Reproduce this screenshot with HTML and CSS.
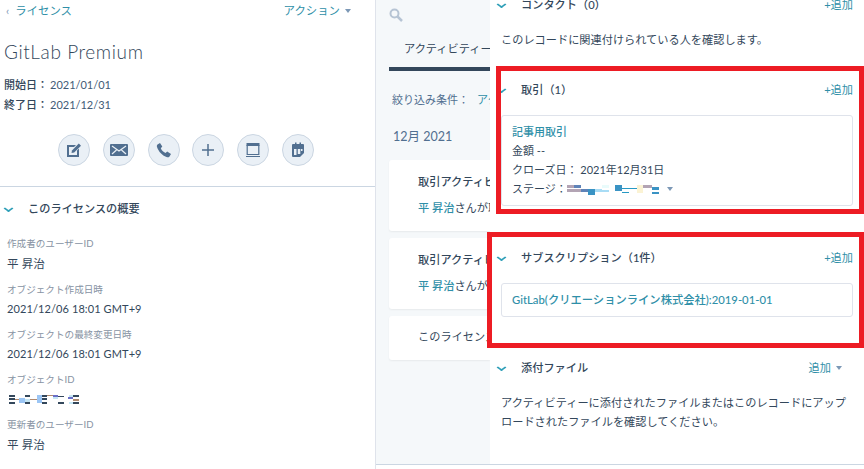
FILE: index.html
```html
<!DOCTYPE html>
<html lang="ja">
<head>
    <meta charset="UTF-8">
    <meta name="viewport" content="width=device-width, initial-scale=1.0">
    <title>GitLab Premium</title>
    <link rel="stylesheet" href="styles.css">
</head>
<body>

<div class="page">
    <aside class="sidebar">
        <div class="topbar">
            <a class="back-link"><span class="back-arrow">‹</span>ライセンス</a>
            <a class="action-link">アクション<span class="caret"></span></a>
        </div>
        <h1 class="record-title">GitLab Premium</h1>
        <div class="date-row"><span class="date-label">開始日：</span>2021/01/01</div>
        <div class="date-row"><span class="date-label">終了日：</span>2021/12/31</div>

        <div class="actions">
            <button class="round-btn">
                <svg viewBox="0 0 16 16" width="16" height="16"><path d="M1 3h9L8 5H3v8h8V8.500l2-2V15H1z"/><path d="M6 8.500 12.800 1.500 15 3.700 8.200 10.500 5.500 11z"/></svg>
            </button>
            <button class="round-btn">
                <svg viewBox="0 0 18 14" width="18" height="14"><rect x="0" y="1" width="18" height="12" rx="1"/><path d="M2 3l7 5 7-5M2 11l4.500-4M16 11l-4.500-4" fill="none" stroke="#eaf0f6" stroke-width="1.200"/></svg>
            </button>
            <button class="round-btn">
                <svg viewBox="0 0 16 16" width="16" height="16"><path d="M1.500 2.500 4 1l2.300 3.500-1.500 1.700c.8 2 2.400 3.700 4.700 4.800l1.700-1.500L15 12l-1.500 2.500c-.6.800-1.500 1-2.400.7C6.500 13.700 2.500 9.700 1 5c-.300-1 0-1.900.5-2.500z"/></svg>
            </button>
            <button class="round-btn">
                <svg viewBox="0 0 14 14" width="14" height="14"><path d="M7 1v12M1 7h12" fill="none" stroke="#516f90" stroke-width="1.500"/></svg>
            </button>
            <button class="round-btn">
                <svg viewBox="0 0 16 16" width="16" height="16"><path d="M1.500 1h13v3h-13z"/><path d="M2.200 3v9.500h11.600V3M1 14.500h14" fill="none" stroke="#516f90" stroke-width="1.200"/></svg>
            </button>
            <button class="round-btn">
                <svg viewBox="0 0 16 16" width="16" height="16"><path d="M3 2h2V.5h1.500V2h3V.5H11V2h2a1 1 0 0 1 1 1v8l-4 4H3a1 1 0 0 1-1-1V3a1 1 0 0 1 1-1z"/><path d="M4 7h2.500v6H4zM7.800 7h2.500v5H7.800zM11 7h1.500v2H11z" fill="#eaf0f6"/></svg>
            </button>
        </div>

        <section class="summary">
            <h2 class="section-heading summary-heading"><span class="chevron"></span>このライセンスの概要</h2>
            <div class="field field-first">
                <div class="field-label">作成者のユーザーID</div>
                <div class="field-value field-name">平 昇治</div>
            </div>
            <div class="field">
                <div class="field-label">オブジェクト作成日時</div>
                <div class="field-value">2021/12/06 18:01 GMT+9</div>
            </div>
            <div class="field">
                <div class="field-label">オブジェクトの最終変更日時</div>
                <div class="field-value">2021/12/06 18:01 GMT+9</div>
            </div>
            <div class="field">
                <div class="field-label">オブジェクトID</div>
                <div class="field-value">
                    <svg class="mosaic" width="74" height="10" viewBox="0 0 74 10">
                        <path fill="#33475b" d="M2 0h6v2H2zM2 3h6v2H2zM2 7h6v2H2zM18 0h5v2h-5zM18 7h5v2h-5zM35 0h5v2h-5zM35 3h5v2h-5zM35 7h5v2h-5zM51 7h6v2h-6zM51 1h6v1h-6zM66 0h6v2h-6zM66 7h6v2h-6z"/>
                        <path fill="#9cc6f5" d="M12 3h6v5h-6zM30 0h5v8h-5zM62 2h4v1h-4z"/>
                        <path fill="#b08a70" d="M8 4h4v1H8zM23 4h7v1h-7zM40 0h6v1h-6zM66 4h6v2h-6z"/>
                        <path fill="#6a6fc8" d="M46 0h5v2h-5zM61 2h5v2h-5z"/>
                        <path fill="#c5e6f5" d="M18 4h5v3h-5zM62 0h4v2h-4zM62 7h4v2h-4zM46 2h5v2h-5z"/>
                    </svg>
                </div>
            </div>
            <div class="field">
                <div class="field-label">更新者のユーザーID</div>
                <div class="field-value field-name">平 昇治</div>
            </div>
        </section>
    </aside>

    <main class="timeline">
        <svg class="search-icon" viewBox="0 0 14 14" width="14" height="14"><circle cx="5.500" cy="5.500" r="4" fill="none" stroke="#b6c4d4" stroke-width="2"/><path d="M8.500 8.500 13 13" stroke="#b6c4d4" stroke-width="2.500"/></svg>
        <div class="tabs">
            <div class="tab">アクティビティー</div>
        </div>
        <div class="filter-row">絞り込み条件：<a class="teal filter-value">アクティビティー</a></div>
        <div class="month">12月 2021</div>
        <div class="activity">
            <div class="activity-title">取引アクティビティー</div>
            <div class="activity-text"><a class="teal">平 昇治</a>さんが取引を追加しました</div>
        </div>
        <div class="activity">
            <div class="activity-title">取引アクティビティー</div>
            <div class="activity-text"><a class="teal">平 昇治</a>さんが取引を追加しました</div>
        </div>
        <div class="activity activity-short">このライセンスが作成されました</div>
    </main>

    <aside class="panel">
        <section class="card-section contact-section">
            <div class="section-heading"><span class="chevron"></span><span class="section-name">コンタクト（0）</span><a class="add-link">+追加</a></div>
            <p class="section-text">このレコードに関連付けられている人を確認します。</p>
        </section>
        <section class="card-section deal-section">
            <div class="section-heading"><span class="chevron"></span><span class="section-name">取引（1）</span><a class="add-link">+追加</a></div>
            <div class="assoc-card">
                <a class="assoc-title">記事用取引</a>
                <div class="assoc-line">金額 --</div>
                <div class="assoc-line">クローズ日： 2021年12月31日</div>
                <div class="assoc-line">ステージ：<svg class="mosaic" width="92" height="10" viewBox="0 0 92 10">
                        <path fill="#b3a4b4" d="M0 0h7v3H0zM0 4h14v3H0zM76 0h9v3h-9z"/>
                        <path fill="#5f83b8" d="M7 0h7v3H7zM14 4h7v3h-7z"/>
                        <path fill="#3a93c4" d="M21 4h7v6h-7zM48 0h7v6h-7zM85 2h7v3h-7zM85 7h7v2h-7z"/>
                        <path fill="#a8dcf5" d="M28 4h7v3h-7zM35 5h7v2h-7z"/>
                        <path fill="#e9fbfb" d="M35 0h7v3h-7z"/>
                        <path fill="#fbf3d4" d="M70 0h6v8h-6z"/>
                        <path fill="#2799c4" d="M55 3h15v1H55zM55 7h7v1h-7z"/>
                    </svg><span class="caret caret-stage"></span>
                </div>
            </div>
        </section>
        <section class="card-section sub-section">
            <div class="section-heading"><span class="chevron"></span><span class="section-name">サブスクリプション（1件）</span><a class="add-link">+追加</a></div>
            <div class="assoc-card sub-card">
                <a class="assoc-title">GitLab(クリエーションライン株式会社):2019-01-01</a>
            </div>
        </section>
        <section class="card-section file-section">
            <div class="section-heading"><span class="chevron"></span><span class="section-name">添付ファイル</span><a class="add-link add-menu">追加<span class="caret"></span></a></div>
            <p class="section-text">アクティビティーに添付されたファイルまたはこのレコードにアップロードされたファイルを確認してください。</p>
        </section>
    </aside>

    <!-- red annotation boxes drawn on top of the screenshot -->
    <div class="mark mark-deal"></div>
    <div class="mark mark-sub"></div>
</div>

</body>
</html>
```

FILE: styles.css
```css
* {
    box-sizing: border-box;
}

body {
    margin: 0;
    padding: 0;
    background-color: #fff;
    color: #33475b;
    font-family: Lato, "Noto Sans CJK JP", sans-serif;
    font-size: 11.2px;
    overflow: hidden;
}

a {
    color: #2f8fa8;
}

.teal {
    color: #2f8fa8;
}

.page {
    position: relative;
    display: flex;
    width: 864px;
    height: 469px;
    overflow: hidden;
}

.sidebar {
    flex: 0 0 376px;
    border-right: 1px solid #dfe3eb;
}

.topbar {
    display: flex;
    justify-content: space-between;
    padding: 2px 24px 0 6px;
    height: 40px;
    font-size: 11.400px;
    line-height: 18px;
}

.back-arrow {
    margin-right: 6px;
    color: #7c98b6;
}

.caret {
    display: inline-block;
    margin-left: 5px;
    border-left: 3.500px solid transparent;
    border-right: 3.500px solid transparent;
    border-top: 4px solid #7c98b6;
    vertical-align: 2px;
}

.record-title {
    margin: 0;
    padding-left: 4px;
    font-size: 19px;
    font-weight: 300;
    line-height: 24px;
    letter-spacing: 0.600px;
}

.date-row {
    padding-left: 4px;
    height: 20px;
    line-height: 20px;
    font-size: 11px;
    color: #425b76;
}

.record-title + .date-row {
    margin-top: 11px;
}

.date-label {
    margin-right: 2px;
    color: #33475b;
    font-weight: 500;
}

.actions {
    display: flex;
    justify-content: center;
    gap: 12.800px;
    margin-top: 19px;
    padding-right: 3px;
    padding-bottom: 20px;
    border-bottom: 1px solid #cbd6e2;
}

.round-btn {
    display: flex;
    align-items: center;
    justify-content: center;
    width: 32px;
    height: 32px;
    padding: 0;
    background-color: #eaf0f6;
    border: 1px solid #cbd6e2;
    border-radius: 50%;
}

.round-btn svg {
    fill: #516f90;
}

.section-heading {
    display: flex;
    align-items: center;
    margin: 0;
    font-size: 11.200px;
    font-weight: 500;
    line-height: 18px;
}

.summary-heading {
    padding: 13px 0 0 5px;
}

.chevron {
    flex: none;
    width: 7px;
    height: 7px;
    margin-right: 16px;
    border-right: 2px solid #2f9fb8;
    border-bottom: 2px solid #2f9fb8;
    transform: translateY(-1px) scaleY(0.7) rotate(45deg);
}

.field {
    padding-left: 7px;
    margin-top: 9px;
    height: 36px;
}

.field-first {
    margin-top: 17px;
    height: 37px;
}

.field-label {
    height: 18px;
    font-size: 9.600px;
    line-height: 18px;
    color: #8793a3;
}

.field-value {
    height: 20px;
    line-height: 20px;
    font-size: 11px;
    letter-spacing: 0.100px;
}

.field-name {
    margin-top: 1px;
    font-size: 11.500px;
}

.mosaic {
    display: inline-block;
    vertical-align: middle;
}

/* middle column runs under the right panel */
.timeline {
    position: relative;
    flex: 0 0 114px;
    padding: 0 0 0 13px;
    background-color: #f5f8fa;
    border-bottom: 1px solid #cbd6e2;
    height: 465px;
    overflow: hidden;
    white-space: nowrap;
}

.search-icon {
    position: absolute;
    left: 13px;
    top: 8px;
}

.tabs {
    height: 71px;
    padding-top: 39px;
    border-bottom: 4px solid #33475b;
    margin-bottom: 19px;
}

.tab {
    padding-left: 15px;
    line-height: 20px;
}

.filter-row {
    padding-left: 3px;
    font-size: 11px;
    line-height: 20px;
    color: #516f90;
}

.filter-value {
    margin-left: 8px;
}

.month {
    margin-top: 17px;
    padding-left: 4px;
    font-size: 12.500px;
    line-height: 20px;
    color: #516f90;
}

.activity {
    height: 71px;
    margin-top: 7px;
    padding: 12px 0 0 29px;
    background-color: #fff;
    border-radius: 3px 0 0 3px;
    box-shadow: 0 1px 2px rgba(0, 0, 0, 0.06);
}

.month + .activity {
    margin-top: 13px;
}

.activity-title {
    font-weight: 500;
    line-height: 20px;
}

.activity-text {
    margin-top: 6px;
    line-height: 20px;
}

.activity-text .teal {
    font-weight: 500;
}

.activity-short {
    height: 44px;
    padding-top: 12px;
}

.panel {
    flex: 1;
    margin-top: -5px;
    background-color: #fff;
    z-index: 1;
    height: 470px;
    border-bottom: 1px solid #cbd6e2;
}

.card-section {
    padding: 1px 11px 0 8px;
}

.section-heading .section-name {
    flex: 1;
}

.add-link {
    font-weight: 400;
}

.add-menu {
    margin-right: 11px;
}

.section-text {
    margin: 16px 0 0;
    padding-left: 3px;
    font-size: 11.200px;
    line-height: 19px;
}

.contact-section {
    height: 71px;
}

.deal-section {
    height: 168px;
    padding-top: 15px;
}

.assoc-card {
    margin: 16px 0 0 3px;
    padding: 6px 10px;
    height: 91px;
    border: 1px solid #dfe3eb;
    border-radius: 3px;
}

.assoc-title {
    display: block;
    font-size: 11px;
    font-weight: 500;
    line-height: 19px;
}

.assoc-line {
    font-size: 11px;
    line-height: 19px;
}

.caret-stage {
    margin-left: 8px;
}

.sub-section {
    height: 125px;
    padding-top: 15px;
}

.sub-card {
    height: 34px;
    padding-top: 6px;
}

.sub-card .assoc-title {
    font-size: 11.300px;
}

.file-section {
    padding-top: 0;
}

.mark {
    position: absolute;
    z-index: 2;
    border: 5px solid #ed1c24;
}

.mark-deal {
    left: 496px;
    top: 66px;
    width: 368px;
    height: 148px;
}

.mark-sub {
    left: 487px;
    top: 232px;
    width: 377px;
    height: 116px;
}
```
